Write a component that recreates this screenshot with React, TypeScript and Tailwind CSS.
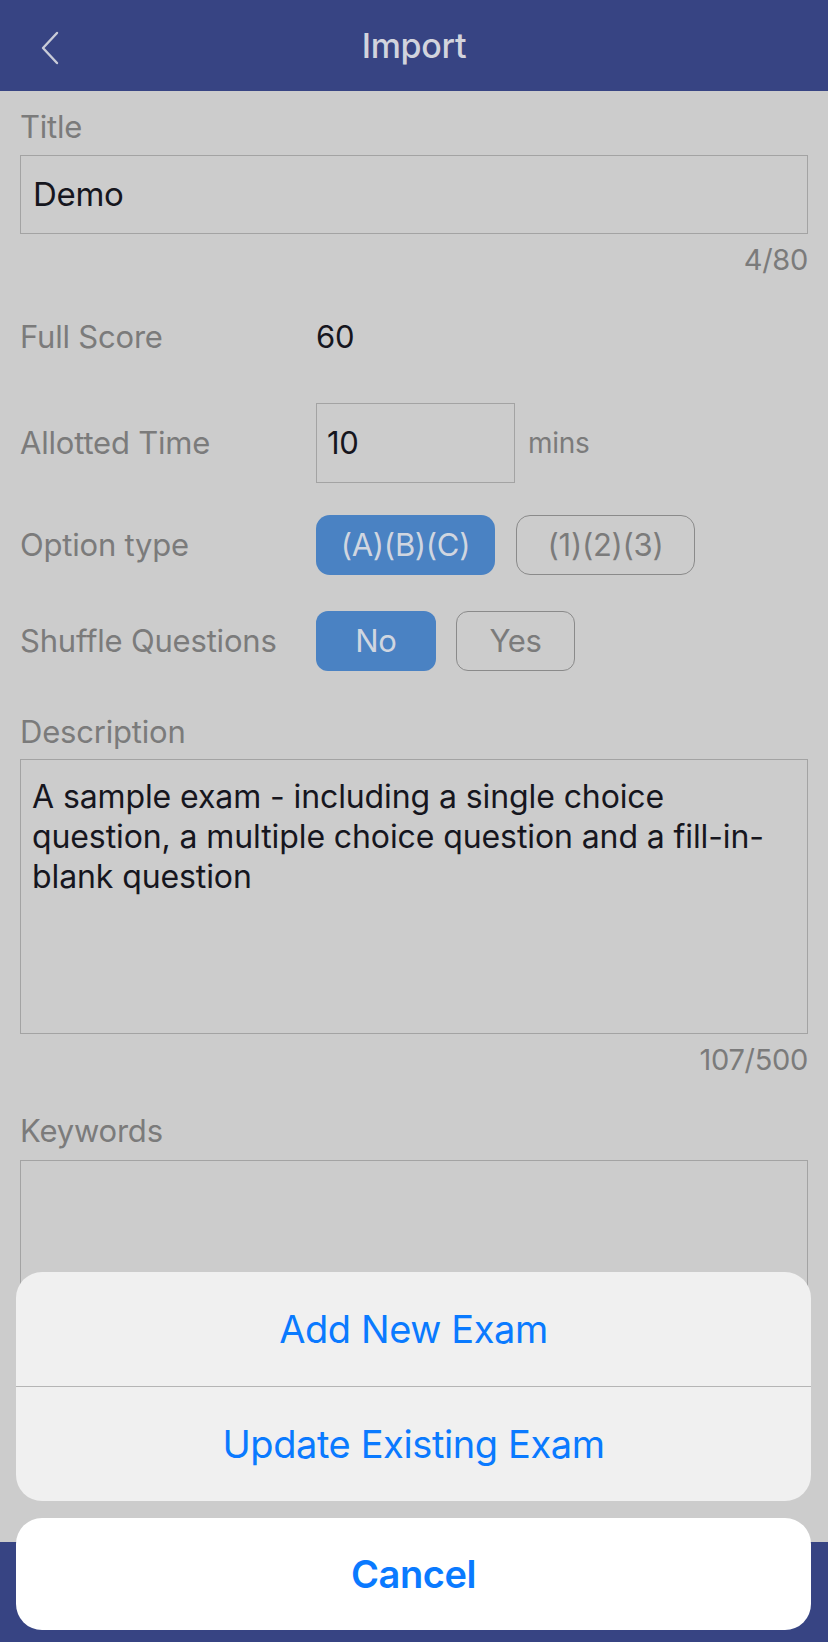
import React from "react";

const font = { fontFamily: "Inter, 'Noto Sans', sans-serif" };

function Label({ children }: { children: React.ReactNode }) {
  return <div className="text-[31px] leading-[40px] text-[#7b7b7b] tracking-[-0.2px]">{children}</div>;
}

export default function App() {
  return (
    <div className="relative w-[828px] h-[1642px] overflow-hidden bg-[#cccccc]" style={font}>
      {/* Header */}
      <div className="h-[91px] bg-[#374483] flex items-center justify-center relative">
        <svg className="absolute left-[38px] top-[30px]" width="24" height="36" viewBox="0 0 24 36">
          <path d="M19 3 L5 18 L19 33" fill="none" stroke="#c9ccd8" strokeWidth="2.4" strokeLinecap="round" strokeLinejoin="round" />
        </svg>
        <div className="text-[34px] font-medium text-[#d2d4dd] tracking-[-0.3px]">Import</div>
      </div>

      {/* Content */}
      <div className="px-[20px]">
        <div className="pt-[16px]">
          <Label>Title</Label>
        </div>
        <div className="mt-[8px] h-[79px] border border-[#a3a3a3] flex items-center px-[12px]">
          <span className="text-[33px] text-[#16161e] tracking-[-0.3px]">Demo</span>
        </div>
        <div className="text-right text-[29px] leading-[36px] text-[#7b7b7b] mt-[8px] tracking-[-0.3px]">4/80</div>

        {/* Full score */}
        <div className="mt-[39px] flex items-center h-[40px]">
          <div className="w-[296px]"><Label>Full Score</Label></div>
          <span className="text-[31px] text-[#16161e] tracking-[-0.3px]">60</span>
        </div>

        {/* Allotted time */}
        <div className="mt-[46px] flex items-center">
          <div className="w-[296px]"><Label>Allotted Time</Label></div>
          <div className="w-[199px] h-[80px] border border-[#a3a3a3] flex items-center px-[10px]">
            <span className="text-[31px] text-[#16161e] tracking-[-0.3px]">10</span>
          </div>
          <span className="ml-[13px] text-[28px] text-[#7b7b7b] tracking-[-0.3px]">mins</span>
        </div>

        {/* Option type */}
        <div className="mt-[32px] flex items-center">
          <div className="w-[296px]"><Label>Option type</Label></div>
          <div className="flex gap-[21px]">
            <div className="w-[179px] h-[60px] rounded-[14px] bg-[#4a82c3] flex items-center justify-center text-[31px] text-[#d0d6e0] tracking-[-0.3px]">(A)(B)(C)</div>
            <div className="w-[179px] h-[60px] rounded-[14px] border border-[#8a8a8a] flex items-center justify-center text-[31px] text-[#7b7b7b] tracking-[-0.3px]">(1)(2)(3)</div>
          </div>
        </div>

        {/* Shuffle */}
        <div className="mt-[36px] flex items-center">
          <div className="w-[296px]"><Label>Shuffle Questions</Label></div>
          <div className="flex gap-[20px]">
            <div className="w-[120px] h-[60px] rounded-[12px] bg-[#4a82c3] flex items-center justify-center text-[31px] text-[#d0d6e0] tracking-[-0.3px]">No</div>
            <div className="w-[119px] h-[60px] rounded-[12px] border border-[#8a8a8a] flex items-center justify-center text-[31px] text-[#7b7b7b] tracking-[-0.3px]">Yes</div>
          </div>
        </div>

        {/* Description */}
        <div className="mt-[41px]">
          <Label>Description</Label>
        </div>
        <div className="mt-[7px] h-[275px] border border-[#a3a3a3] px-[11px] pt-[17px]">
          <div className="text-[32px] leading-[40px] text-[#16161e] tracking-[-0.1px]">
            <div>A sample exam - including a single choice</div>
            <div>question, a multiple choice question and a fill-in-</div>
            <div>blank question</div>
          </div>
        </div>
        <div className="text-right text-[29px] leading-[36px] text-[#7b7b7b] mt-[8px] tracking-[-0.3px]">107/500</div>

        {/* Keywords */}
        <div className="mt-[33px]">
          <Label>Keywords</Label>
        </div>
        <div className="mt-[9px] h-[300px] border border-[#a3a3a3]"></div>
      </div>

      {/* bottom bar */}
      <div className="absolute left-0 right-0 bottom-0 h-[100px] bg-[#374483]"></div>

      {/* Action sheet overlay */}
      <div className="absolute left-[16px] right-[17px] bottom-[12px] flex flex-col gap-[17px]">
        <div className="rounded-[26px] bg-[#f0f0f0] overflow-hidden">
          <div className="h-[114px] flex items-center justify-center text-[38px] text-[#0a7aff] tracking-[-0.4px]">Add New Exam</div>
          <div className="h-[1px] bg-[#b5b5b5]"></div>
          <div className="h-[114px] flex items-center justify-center text-[38px] text-[#0a7aff] tracking-[-0.4px]">Update Existing Exam</div>
        </div>
        <div className="h-[112px] rounded-[26px] bg-white flex items-center justify-center text-[38px] font-semibold text-[#0a7aff] tracking-[-0.4px]">Cancel</div>
      </div>
    </div>
  );
}
